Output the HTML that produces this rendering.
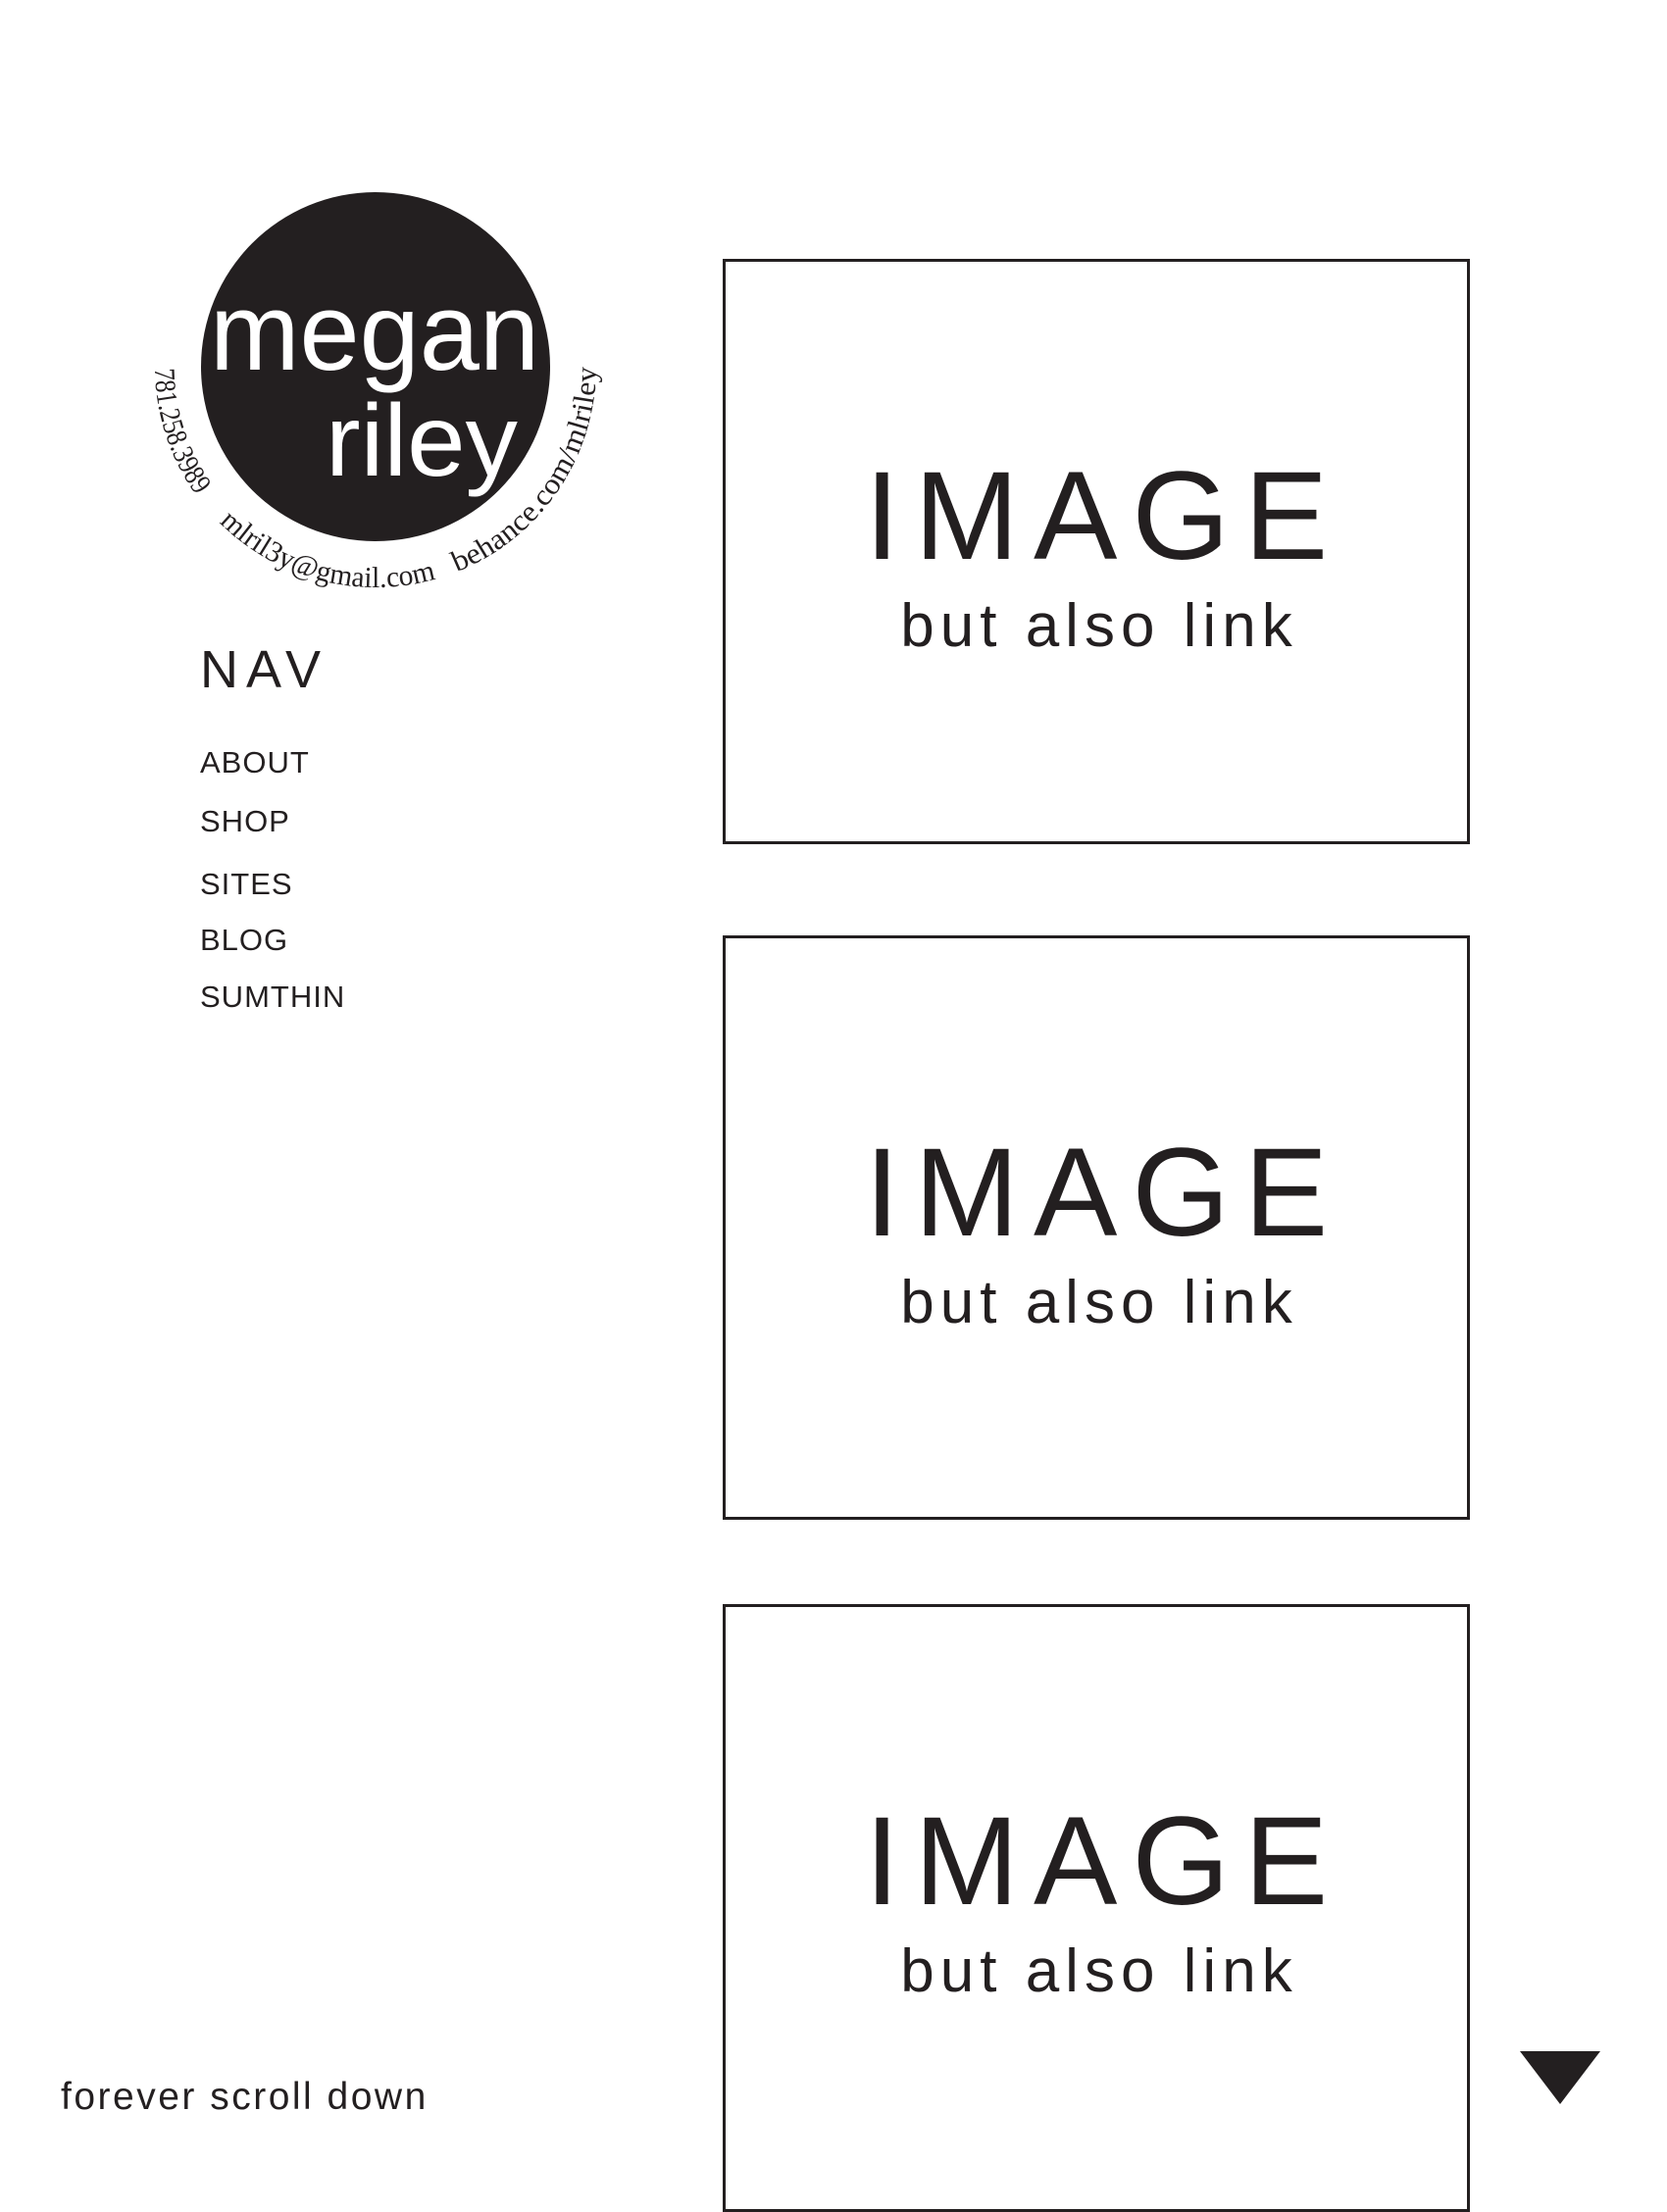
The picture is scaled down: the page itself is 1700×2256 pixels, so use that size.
<!DOCTYPE html>
<html><head><meta charset="utf-8"><style>
html,body{margin:0;padding:0;background:#fff;}
body{width:1700px;height:2200px;position:relative;overflow:hidden;font-family:"Liberation Sans",sans-serif;color:#231f20;}
.box{position:absolute;left:737px;width:762px;border:3px solid #231f20;box-sizing:border-box;}
.box .t1{position:absolute;left:0;right:0;text-align:center;font-size:128px;line-height:1;top:196px;letter-spacing:15px;text-indent:15px;}
.box .t2{position:absolute;left:0;right:0;text-align:center;font-size:62px;line-height:1;top:341px;letter-spacing:6px;text-indent:6px;}
.nav{position:absolute;left:204px;font-size:54px;top:652px;letter-spacing:8px;}
.mi{position:absolute;left:204px;font-size:31px;letter-spacing:1px;}
</style></head><body>
<svg width="700" height="650" style="position:absolute;left:0;top:0" viewBox="0 0 700 650">
<circle cx="383" cy="374" r="178" fill="#231f20"/>
<text x="214" y="377" font-family="Liberation Sans,sans-serif" font-size="112" fill="#fff" textLength="336" lengthAdjust="spacingAndGlyphs">megan</text>
<text x="332" y="485" font-family="Liberation Sans,sans-serif" font-size="104" fill="#fff" textLength="196" lengthAdjust="spacingAndGlyphs">riley</text>
<path id="arc" d="M158,374 A225,225 0 0 0 608,374" fill="none"/>
<g font-family="Liberation Serif,serif" font-size="30" fill="#231f20">
<text><textPath href="#arc" startOffset="2" textLength="138" lengthAdjust="spacingAndGlyphs">781.258.3989</textPath></text>
<text><textPath href="#arc" startOffset="176" textLength="240" lengthAdjust="spacingAndGlyphs">mlril3y@gmail.com</textPath></text>
<text><textPath href="#arc" startOffset="438" textLength="268" lengthAdjust="spacingAndGlyphs">behance.com/mlriley</textPath></text>
</g>
</svg>
<div class="nav">NAV</div>
<div class="mi" style="top:760px">ABOUT</div>
<div class="mi" style="top:820px">SHOP</div>
<div class="mi" style="top:884px">SITES</div>
<div class="mi" style="top:941px">BLOG</div>
<div class="mi" style="top:999px">SUMTHIN</div>
<div class="box" style="top:264px;height:597px"><div class="t1">IMAGE</div><div class="t2">but also link</div></div>
<div class="box" style="top:954px;height:596px"><div class="t1">IMAGE</div><div class="t2">but also link</div></div>
<div class="box" style="top:1636px;height:620px"><div class="t1">IMAGE</div><div class="t2">but also link</div></div>
<div style="position:absolute;left:62px;top:2117px;font-size:39px;letter-spacing:2.5px;">forever scroll down</div>
<svg style="position:absolute;left:1548px;top:2090px" width="86" height="58"><polygon points="2,2 84,2 43,56" fill="#231f20"/></svg>
</body></html>
